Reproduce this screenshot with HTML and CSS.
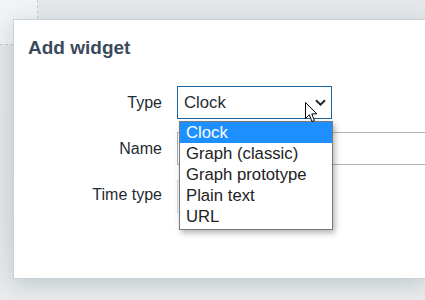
FILE: index.html
```html
<!DOCTYPE html>
<html>
<head>
  <title>Add widget</title>
  <meta name="viewport" content="width=device-width, initial-scale=1.0">
  <link rel="stylesheet" href="styles.css">
</head>
<body>
  <div class="dashboard">
    <div class="grid-cell"></div>
  </div>

  <div class="dialog">
    <h4 class="dialog-title">Add widget</h4>
    <form class="form-grid">
      <label class="form-label">Type</label>
      <div class="form-field">
        <div class="select">
          <span>Clock</span>
          <svg class="chevron" width="11" height="7" viewBox="0 0 11 7">
            <path d="M1 1.2 L5.5 5.7 L10 1.2" fill="none" stroke="#1f2c33" stroke-width="2"/>
          </svg>
        </div>
        <ul class="dropdown">
          <li class="selected">Clock</li>
          <li>Graph (classic)</li>
          <li>Graph prototype</li>
          <li>Plain text</li>
          <li>URL</li>
        </ul>
        <svg class="cursor" width="13" height="21" viewBox="0 0 13 21">
          <path d="M0.5 0.5 L0.5 16.5 L4.3 12.8 L7 19.5 L9.4 18.5 L6.8 11.9 L11.8 11.9 Z" fill="#fff" stroke="#000" stroke-width="1" stroke-linejoin="round"/>
        </svg>
      </div>

      <label class="form-label">Name</label>
      <div class="form-field">
        <div class="text-input"></div>
      </div>

      <label class="form-label">Time type</label>
      <div class="form-field">
        <div class="radio-list"></div>
      </div>
    </form>
  </div>
</body>
</html>
```

FILE: styles.css
```css
body {
  font-family: 'Liberation Sans', Arial, sans-serif;
  background: linear-gradient(180deg, #e4e8ea 0%, #e1e5e8 70%, #eaedee 100%);
  margin: 0;
  width: 425px;
  height: 300px;
  overflow: hidden;
  position: relative;
}

.grid-cell {
  width: 37px;
  height: 44px;
  background: #f1f3f4;
  border-right: 1px dashed #c4cacd;
  border-bottom: 1px dashed #c4cacd;
}

.dialog {
  position: absolute;
  left: 13px;
  top: 19px;
  width: 413px;
  height: 260px;
  background: #fff;
  border: 1px solid #c9d1d6;
  border-right: none;
  box-shadow: 0 6px 22px rgba(60, 80, 95, 0.22);
  padding: 16px 0 0 14px;
  box-sizing: border-box;
}

.dialog-title {
  margin: 0 0 26px 0;
  font-size: 19px;
  line-height: 24px;
  font-weight: bold;
  color: #3a4a5a;
}

.form-grid {
  display: grid;
  grid-template-columns: 134px 1fr;
  grid-auto-rows: 33px;
  column-gap: 15px;
  row-gap: 13px;
}

.form-label {
  text-align: right;
  line-height: 33px;
  font-size: 16px;
  color: #1f2c33;
}

.form-field {
  position: relative;
}

.select {
  width: 155px;
  height: 33px;
  box-sizing: border-box;
  border: 1px solid #1a65a0;
  padding: 0 5px 0 6px;
  display: flex;
  align-items: center;
  justify-content: space-between;
  font-size: 16.7px;
  color: #1f2c33;
}

.dropdown {
  position: absolute;
  left: 2px;
  top: 35px;
  width: 154px;
  margin: 0;
  padding: 0 0 2px 0;
  list-style: none;
  background: #fff;
  border: 1px solid #7b7b7b;
  box-shadow: 2px 3px 6px rgba(0, 0, 0, 0.3);
  box-sizing: border-box;
  z-index: 2;
}

.dropdown li {
  height: 21px;
  line-height: 21px;
  padding: 0 6px;
  font-size: 16.7px;
  color: #222;
  white-space: nowrap;
}

.dropdown li.selected {
  background: #1e8fff;
  color: #fff;
}

.cursor {
  position: absolute;
  left: 128px;
  top: 16px;
  z-index: 3;
}

.text-input {
  width: 100%;
  height: 33px;
  box-sizing: border-box;
  border: 1px solid #a9b5bd;
  border-right: none;
}

.radio-list {
  width: 150px;
  height: 33px;
  margin-top: 2px;
  box-sizing: border-box;
  border: 1px solid #d3d9dd;
}
```
